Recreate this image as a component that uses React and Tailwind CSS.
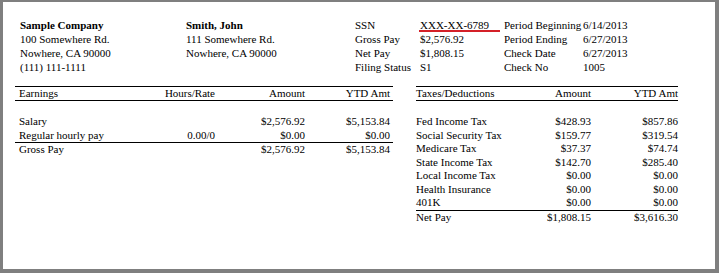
import React from "react";

const earnings = [
  { label: "Salary", rate: "", amount: "$2,576.92", ytd: "$5,153.84" },
  { label: "Regular hourly pay", rate: "0.00/0", amount: "$0.00", ytd: "$0.00", rule: true },
  { label: "Gross Pay", rate: "", amount: "$2,576.92", ytd: "$5,153.84" },
];

const deductions = [
  { label: "Fed Income Tax", amount: "$428.93", ytd: "$857.86" },
  { label: "Social Security Tax", amount: "$159.77", ytd: "$319.54" },
  { label: "Medicare Tax", amount: "$37.37", ytd: "$74.74" },
  { label: "State Income Tax", amount: "$142.70", ytd: "$285.40" },
  { label: "Local Income Tax", amount: "$0.00", ytd: "$0.00" },
  { label: "Health Insurance", amount: "$0.00", ytd: "$0.00" },
  { label: "401K", amount: "$0.00", ytd: "$0.00", rule: true },
  { label: "Net Pay", amount: "$1,808.15", ytd: "$3,616.30" },
];

const App = () => {
  return (
    <div className="w-[719px] h-[273px] bg-white text-black border-t-2 border-l-[3px] border-r-4 border-b-4 border-[#7f7f7f] text-[11px] overflow-hidden font-['Liberation_Serif','Times_New_Roman',serif]">
      <div className="pt-4">
        {/* top info block */}
        <div className="flex leading-[14px] pl-[17px]">
          <div className="w-[166px]">
            <div className="font-bold">Sample Company</div>
            <div>100 Somewhere Rd.</div>
            <div>Nowhere, CA 90000</div>
            <div>(111) 111-1111</div>
          </div>
          <div className="w-[169px]">
            <div className="font-bold">Smith, John</div>
            <div>111 Somewhere Rd.</div>
            <div>Nowhere, CA 90000</div>
          </div>
          <div className="grid grid-cols-[65px_84px_79px_80px]">
            <div>SSN</div>
            <div className="relative">
              <span className="underline">XXX-XX-6789</span>
              <div className="absolute left-[-1px] top-[12px] w-[81px] h-[2px] bg-[#d42028]"></div>
            </div>
            <div>Period Beginning</div>
            <div>6/14/2013</div>
            <div>Gross Pay</div>
            <div>$2,576.92</div>
            <div>Period Ending</div>
            <div>6/27/2013</div>
            <div>Net Pay</div>
            <div>$1,808.15</div>
            <div>Check Date</div>
            <div>6/27/2013</div>
            <div>Filing Status</div>
            <div>S1</div>
            <div>Check No</div>
            <div>1005</div>
          </div>
        </div>

        {/* tables */}
        <div className="flex mt-3 pl-3 gap-[23px]">
          <div className="w-[378px]">
            <div className="grid grid-cols-[131px_65px_90px_85px] pl-1 pr-[3px] border-t border-b border-black leading-[13px]">
              <div>Earnings</div>
              <div className="text-right">Hours/Rate</div>
              <div className="text-right">Amount</div>
              <div className="text-right">YTD Amt</div>
            </div>
            <div className="mt-[14px] leading-[13.5px]">
              {earnings.map((row) => (
                <div
                  key={row.label}
                  className={
                    "grid grid-cols-[131px_65px_90px_85px] pl-1 pr-[3px] " +
                    (row.rule ? "border-b border-black" : "")
                  }
                >
                  <div>{row.label}</div>
                  <div className="text-right">{row.rate}</div>
                  <div className="text-right">{row.amount}</div>
                  <div className="text-right">{row.ytd}</div>
                </div>
              ))}
            </div>
          </div>

          <div className="w-[262px]">
            <div className="grid grid-cols-[104px_71px_87px] border-t border-b border-black leading-[13px]">
              <div>Taxes/Deductions</div>
              <div className="text-right">Amount</div>
              <div className="text-right">YTD Amt</div>
            </div>
            <div className="mt-[14px] leading-[13.5px]">
              {deductions.map((row) => (
                <div
                  key={row.label}
                  className={
                    "grid grid-cols-[104px_71px_87px] " +
                    (row.rule ? "border-b border-black" : "")
                  }
                >
                  <div>{row.label}</div>
                  <div className="text-right">{row.amount}</div>
                  <div className="text-right">{row.ytd}</div>
                </div>
              ))}
            </div>
          </div>
        </div>
      </div>
    </div>
  );
};

export default App;
